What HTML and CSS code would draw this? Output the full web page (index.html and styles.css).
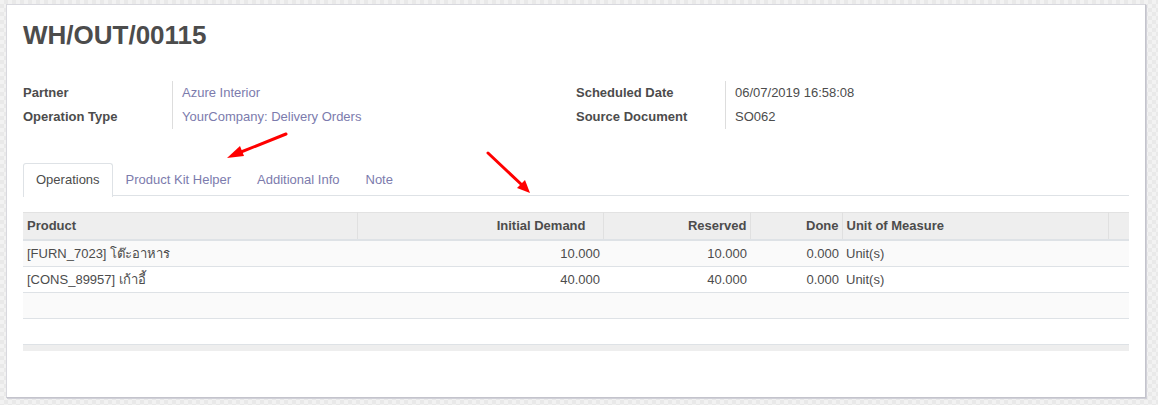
FILE: index.html
```html
<!DOCTYPE html>
<html>
<head>
<meta charset="utf-8">
<link rel="stylesheet" href="styles.css">
</head>
<body>
<div class="sheet">
  <h1 class="title">WH/OUT/00115</h1>
  <div class="groups">
    <div class="group">
      <div class="label">Partner</div><div class="value link">Azure Interior</div>
      <div class="label">Operation Type</div><div class="value link">YourCompany: Delivery Orders</div>
    </div>
    <div class="group">
      <div class="label">Scheduled Date</div><div class="value">06/07/2019 16:58:08</div>
      <div class="label">Source Document</div><div class="value">SO062</div>
    </div>
  </div>
  <div class="tabs">
    <div class="tab active">Operations</div>
    <div class="tab">Product Kit Helper</div>
    <div class="tab">Additional Info</div>
    <div class="tab">Note</div>
  </div>
  <table class="grid">
    <colgroup>
      <col class="c1"><col class="c2"><col class="c3"><col class="c4"><col class="c5"><col class="c6">
    </colgroup>
    <thead>
      <tr>
        <th>Product</th>
        <th class="num demand">Initial Demand</th>
        <th class="num">Reserved</th>
        <th class="num">Done</th>
        <th>Unit of Measure</th>
        <th></th>
      </tr>
    </thead>
    <tbody>
      <tr class="odd"><td>[FURN_7023] โต๊ะอาหาร</td><td class="num">10.000</td><td class="num">10.000</td><td class="num">0.000</td><td>Unit(s)</td><td></td></tr>
      <tr><td>[CONS_89957] เก้าอี้</td><td class="num">40.000</td><td class="num">40.000</td><td class="num">0.000</td><td>Unit(s)</td><td></td></tr>
      <tr class="odd"><td></td><td></td><td></td><td></td><td></td><td></td></tr>
      <tr><td></td><td></td><td></td><td></td><td></td><td></td></tr>
    </tbody>
    <tfoot>
      <tr><td colspan="6"></td></tr>
    </tfoot>
  </table>
</div>
<svg class="arrows" width="1158" height="405" viewBox="0 0 1158 405">
  <line x1="286" y1="134" x2="236" y2="154" stroke="#ff0000" stroke-width="3" stroke-linecap="round"/>
  <polygon points="227,158 240,146 244,156" fill="#ff0000"/>
  <line x1="488" y1="153" x2="522" y2="185" stroke="#ff0000" stroke-width="3" stroke-linecap="round"/>
  <polygon points="530,193 517,188 525,180" fill="#ff0000"/>
</svg>
</body>
</html>
```
FILE: styles.css
```css
html, body {
  margin: 0;
  padding: 0;
}
body {
  width: 1158px;
  height: 405px;
  overflow: hidden;
  position: relative;
  font-family: "Liberation Sans", Arial, sans-serif;
  font-size: 13px;
  color: #4c4c4c;
  background-color: #f2f2f2;
  background-image:
    linear-gradient(45deg, #e9e9e9 25%, transparent 25%, transparent 75%, #e9e9e9 75%),
    linear-gradient(45deg, #e9e9e9 25%, transparent 25%, transparent 75%, #e9e9e9 75%);
  background-size: 8px 8px;
  background-position: 0 0, 4px 4px;
  padding: 4px 0 0 6px;
  box-sizing: border-box;
}
.sheet {
  width: 1140px;
  height: 394px;
  box-sizing: border-box;
  background: #fff;
  border: 1px solid #d8d8de;
  border-right-color: #c4c4cc;
  border-bottom-color: #c4c4cc;
  box-shadow: 1px 1px 0 #d0d0d8;
  padding: 14px 16px 0 16px;
}
.title {
  margin: 0;
  font-size: 26px;
  line-height: 32px;
  font-weight: bold;
  color: #4c4c4c;
}
.groups {
  display: grid;
  grid-template-columns: 1fr 1fr;
  margin-top: 30px;
}
.group {
  display: grid;
  grid-template-columns: 150px 1fr;
  grid-auto-rows: 24px;
}
.label {
  font-weight: bold;
  line-height: 24px;
  border-right: 1px solid #dddddd;
}
.value {
  line-height: 24px;
  padding-left: 9px;
}
.link {
  color: #7c7bad;
}
.tabs {
  display: flex;
  margin-top: 34px;
  border-bottom: 1px solid #dee2e6;
  height: 32px;
}
.tab {
  padding: 0 12px;
  line-height: 32px;
  height: 32px;
  border: 1px solid transparent;
  border-bottom: none;
  color: #7c7bad;
}
.tab.active {
  color: #4c4c4c;
  background: #fff;
  border-color: #dee2e6;
  border-radius: 3px 3px 0 0;
  height: 33px;
}
.grid {
  margin-top: 16px;
  width: 1106px;
  border-collapse: collapse;
  table-layout: fixed;
}
.c1 { width: 334px; }
.c2 { width: 246px; }
.c3 { width: 147px; }
.c4 { width: 92px; }
.c5 { width: 266px; }
.c6 { width: 21px; }
.grid th {
  background: #eeeeee;
  height: 27px;
  padding: 0 4px;
  text-align: left;
  font-weight: bold;
  color: #4c4c4c;
  border-top: 1px solid #e2e2e2;
  border-bottom: 2px solid #dee2e6;
  border-left: 1px solid #e0e0e0;
  border-right: 1px solid #e0e0e0;
  box-sizing: border-box;
}
.grid th:first-child { border-left: none; }
.grid th:last-child { border-right: none; }
.grid th.num { text-align: right; padding-right: 3px; }
.grid th.demand { padding-right: 17px; }
.grid td {
  height: 25px;
  padding: 0 4px;
  border-bottom: 1px solid #dee2e6;
  white-space: nowrap;
  overflow: hidden;
}
.grid td.num { text-align: right; padding-right: 3px; }
.grid tr.odd td { background: #fafafa; }
.grid tfoot td {
  height: 6px;
  padding: 0;
  background: #eeeeee;
  border-top: 1px solid #e4e4e4;
  border-bottom: none;
}
.arrows {
  position: absolute;
  left: 0;
  top: 0;
  pointer-events: none;
}
```
